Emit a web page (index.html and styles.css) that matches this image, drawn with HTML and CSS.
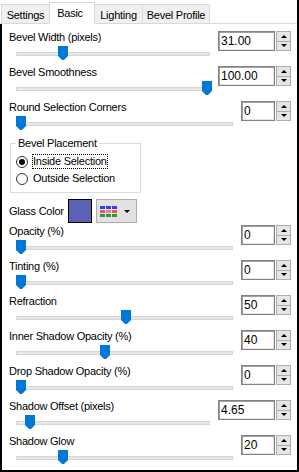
FILE: index.html
```html
<!DOCTYPE html>
<html lang="en">
<head>
    <meta charset="UTF-8">
    <title>Glass - Basic</title>
    <link rel="stylesheet" href="styles.css">
</head>
<body>
    <div class="win">
        <div class="tabs">
            <div class="tab t-settings">Settings</div>
            <div class="tab active t-basic">Basic</div>
            <div class="tab t-lighting">Lighting</div>
            <div class="tab t-profile">Bevel Profile</div>
        </div>
        <div class="panel">
            <div class="row">
                <div class="ctl">
                    <div class="lbl">Bevel Width (pixels)</div>
                    <div class="slider"><div class="track"></div><svg class="thumb" style="left:49px" width="10" height="14"><polygon points="0,0 10,0 10,10 6,14 4,14 0,10"/></svg></div>
                </div>
                <div class="spin wide"><div class="val">31.00</div><div class="arr"><span class="up"></span><span class="dn"></span></div></div>
            </div>
            <div class="row">
                <div class="ctl">
                    <div class="lbl">Bevel Smoothness</div>
                    <div class="slider"><div class="track"></div><svg class="thumb" style="left:193px" width="10" height="14"><polygon points="0,0 10,0 10,10 6,14 4,14 0,10"/></svg></div>
                </div>
                <div class="spin wide"><div class="val">100.00</div><div class="arr"><span class="up"></span><span class="dn"></span></div></div>
            </div>
            <div class="row">
                <div class="ctl">
                    <div class="lbl">Round Selection Corners</div>
                    <div class="slider"><div class="track"></div><svg class="thumb" style="left:7px" width="10" height="14"><polygon points="0,0 10,0 10,10 6,14 4,14 0,10"/></svg></div>
                </div>
                <div class="spin"><div class="val">0</div><div class="arr"><span class="up"></span><span class="dn"></span></div></div>
            </div>

            <fieldset class="group">
                <legend>Bevel Placement</legend>
                <div class="opt"><span class="radio on"></span><span class="focus">Inside Selection</span></div>
                <div class="opt"><span class="radio"></span><span>Outside Selection</span></div>
            </fieldset>

            <div class="glass">
                <div class="glass-lbl">Glass Color</div>
                <div class="swatch"></div>
                <div class="pick">
                    <svg width="17" height="11">
                        <rect x="0" y="0" width="5" height="3" fill="#3a3af2"/><rect x="6" y="0" width="5" height="3" fill="#3a3af2"/><rect x="12" y="0" width="5" height="3" fill="#3a3af2"/>
                        <rect x="0" y="4" width="5" height="3" fill="#f25555"/><rect x="6" y="4" width="5" height="3" fill="#f28080"/><rect x="12" y="4" width="5" height="3" fill="#f25555"/>
                        <rect x="0" y="8" width="5" height="3" fill="#2a9a3a"/><rect x="6" y="8" width="5" height="3" fill="#2a9a3a"/><rect x="12" y="8" width="5" height="3" fill="#2a9a3a"/>
                    </svg>
                    <span class="drop"></span>
                </div>
            </div>

            <div class="row first">
                <div class="ctl">
                    <div class="lbl">Opacity (%)</div>
                    <div class="slider"><div class="track"></div><svg class="thumb" style="left:7px" width="10" height="14"><polygon points="0,0 10,0 10,10 6,14 4,14 0,10"/></svg></div>
                </div>
                <div class="spin"><div class="val">0</div><div class="arr"><span class="up"></span><span class="dn"></span></div></div>
            </div>
            <div class="row">
                <div class="ctl">
                    <div class="lbl">Tinting (%)</div>
                    <div class="slider"><div class="track"></div><svg class="thumb" style="left:7px" width="10" height="14"><polygon points="0,0 10,0 10,10 6,14 4,14 0,10"/></svg></div>
                </div>
                <div class="spin"><div class="val">0</div><div class="arr"><span class="up"></span><span class="dn"></span></div></div>
            </div>
            <div class="row">
                <div class="ctl">
                    <div class="lbl">Refraction</div>
                    <div class="slider"><div class="track"></div><svg class="thumb" style="left:112px" width="10" height="14"><polygon points="0,0 10,0 10,10 6,14 4,14 0,10"/></svg></div>
                </div>
                <div class="spin"><div class="val">50</div><div class="arr"><span class="up"></span><span class="dn"></span></div></div>
            </div>
            <div class="row">
                <div class="ctl">
                    <div class="lbl">Inner Shadow Opacity (%)</div>
                    <div class="slider"><div class="track"></div><svg class="thumb" style="left:91px" width="10" height="14"><polygon points="0,0 10,0 10,10 6,14 4,14 0,10"/></svg></div>
                </div>
                <div class="spin"><div class="val">40</div><div class="arr"><span class="up"></span><span class="dn"></span></div></div>
            </div>
            <div class="row">
                <div class="ctl">
                    <div class="lbl">Drop Shadow Opacity (%)</div>
                    <div class="slider"><div class="track"></div><svg class="thumb" style="left:7px" width="10" height="14"><polygon points="0,0 10,0 10,10 6,14 4,14 0,10"/></svg></div>
                </div>
                <div class="spin"><div class="val">0</div><div class="arr"><span class="up"></span><span class="dn"></span></div></div>
            </div>
            <div class="row">
                <div class="ctl">
                    <div class="lbl">Shadow Offset (pixels)</div>
                    <div class="slider"><div class="track"></div><svg class="thumb" style="left:16px" width="10" height="14"><polygon points="0,0 10,0 10,10 6,14 4,14 0,10"/></svg></div>
                </div>
                <div class="spin wide"><div class="val">4.65</div><div class="arr"><span class="up"></span><span class="dn"></span></div></div>
            </div>
            <div class="row">
                <div class="ctl">
                    <div class="lbl">Shadow Glow</div>
                    <div class="slider"><div class="track"></div><svg class="thumb" style="left:49px" width="10" height="14"><polygon points="0,0 10,0 10,10 6,14 4,14 0,10"/></svg></div>
                </div>
                <div class="spin"><div class="val">20</div><div class="arr"><span class="up"></span><span class="dn"></span></div></div>
            </div>
        </div>
    </div>
</body>
</html>
```

FILE: styles.css
```css
* {
    box-sizing: border-box;
}
body {
    margin: 0;
    font-family: "Liberation Sans", Arial, sans-serif;
    font-size: 11px;
    letter-spacing: -0.25px;
    color: #000;
    background: #fff;
}
.win {
    width: 299px;
    height: 472px;
    border-right: 2px solid #000;
    background: #fff;
}

/* tab strip */
.tabs {
    display: flex;
    align-items: flex-end;
    height: 24px;
    padding-left: 1px;
    border-bottom: 1px solid #d9d9d9;
}
.tab {
    height: 19px;
    padding-top: 4px;
    line-height: 13px;
    text-align: center;
    background: #f0f0f0;
    border: 1px solid #d9d9d9;
    border-bottom: none;
    margin-right: -1px;
}
.tab.active {
    height: 22px;
    margin-bottom: -1px;
    background: #fff;
    position: relative;
    z-index: 1;
}
.t-settings { width: 49px; }
.t-basic { width: 46px; padding-right: 4px; }
.t-lighting { width: 49px; }
.t-profile { width: 68px; }

.panel {
    height: 448px;
    border-left: 2px solid #000;
    border-bottom: 2px solid #000;
    padding: 7px 6px 0 7px;
}

/* slider rows */
.row {
    display: flex;
    height: 35px;
}
.row.first {
    margin-top: 2px;
}
.ctl {
    flex: 1;
}
.lbl {
    line-height: 13px;
    white-space: nowrap;
}
.slider {
    position: relative;
    height: 22px;
    padding: 8px 0 0 7px;
}
.track {
    height: 4px;
    background: #e7e7e7;
    border: 1px solid #d6d6d6;
}
.thumb {
    position: absolute;
    top: 2px;
    fill: #0078d7;
}

.spin {
    display: flex;
    width: 50px;
    height: 20px;
    margin-left: 8px;
}
.spin.wide {
    width: 73px;
}
.val {
    flex: 1;
    border: 1px solid #828282;
    box-shadow: inset 1px 1px 0 #a0a0a0, inset -1px -1px 0 #e3e3e3;
    background: #fff;
    font-size: 12px;
    letter-spacing: 0;
    line-height: 18px;
    padding-left: 2px;
}
.arr {
    width: 15px;
    margin-left: 1px;
    display: flex;
    flex-direction: column;
}
.arr span {
    flex: 1;
    background: #e5e5e5;
    border: 1px solid #adadad;
    display: flex;
    align-items: center;
    justify-content: center;
}
.arr .dn {
    border-top: none;
}
.arr span::after {
    content: "";
    border-left: 3px solid transparent;
    border-right: 3px solid transparent;
}
.arr .up::after {
    border-bottom: 3px solid #000;
}
.arr .dn::after {
    border-top: 3px solid #000;
}

/* group box */
.group {
    margin: 0 0 0 1px;
    width: 131px;
    padding: 3px 5px 5px 5px;
    border: 1px solid #dcdcdc;
}
.group legend {
    padding: 0 2px;
    line-height: 14px;
}
.opt {
    display: flex;
    align-items: center;
    height: 17px;
    line-height: 13px;
    white-space: nowrap;
}
.radio {
    width: 12px;
    height: 12px;
    border: 1px solid #333;
    border-radius: 50%;
    margin-right: 5px;
    display: flex;
    align-items: center;
    justify-content: center;
}
.radio.on::after {
    content: "";
    width: 6px;
    height: 6px;
    border-radius: 50%;
    background: #000;
}
.focus {
    outline: 1px dotted #000;
}

/* glass color */
.glass {
    display: flex;
    align-items: center;
    height: 24px;
    margin-top: 6px;
}
.glass-lbl {
    width: 59px;
    line-height: 13px;
}
.swatch {
    width: 24px;
    height: 24px;
    border: 1px solid #000;
    background: #5b62b6;
}
.pick {
    width: 41px;
    height: 24px;
    margin-left: 4px;
    background: #e1e1e1;
    border: 1px solid #adadad;
    display: flex;
    align-items: center;
    padding-left: 3px;
}
.drop {
    margin-left: 7px;
    border-left: 3px solid transparent;
    border-right: 3px solid transparent;
    border-top: 3px solid #000;
}
```
